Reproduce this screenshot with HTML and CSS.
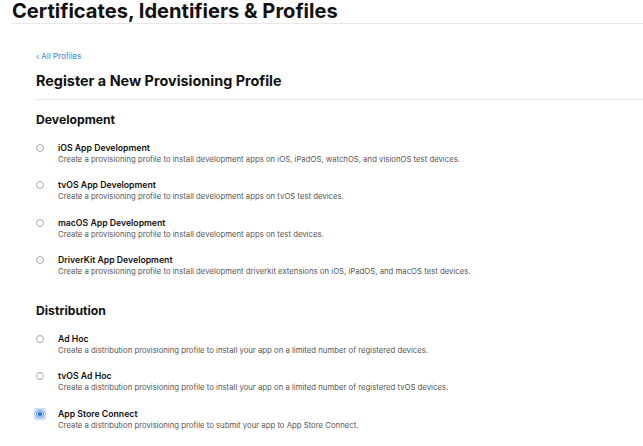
FILE: index.html
```html
<!DOCTYPE html>
<html>
<head>
<meta charset="utf-8">
<link rel="stylesheet" href="styles.css">
</head>
<body>
<header class="page-header">
  <h1 class="page-title">Certificates, Identifiers &amp; Profiles</h1>
</header>
<main class="content">
  <a class="back-link" href="#">&lsaquo; All Profiles</a>
  <h2 class="form-title">Register a New Provisioning Profile</h2>
  <section class="group">
    <h3 class="group-title">Development</h3>
    <label class="option">
      <span class="radio"></span>
      <span class="option-text">
        <span class="option-name">iOS App Development</span>
        <span class="option-desc">Create a provisioning profile to install development apps on iOS, iPadOS, watchOS, and visionOS test devices.</span>
      </span>
    </label>
    <label class="option">
      <span class="radio"></span>
      <span class="option-text">
        <span class="option-name">tvOS App Development</span>
        <span class="option-desc">Create a provisioning profile to install development apps on tvOS test devices.</span>
      </span>
    </label>
    <label class="option">
      <span class="radio"></span>
      <span class="option-text">
        <span class="option-name">macOS App Development</span>
        <span class="option-desc">Create a provisioning profile to install development apps on test devices.</span>
      </span>
    </label>
    <label class="option">
      <span class="radio"></span>
      <span class="option-text">
        <span class="option-name">DriverKit App Development</span>
        <span class="option-desc">Create a provisioning profile to install development driverkit extensions on iOS, iPadOS, and macOS test devices.</span>
      </span>
    </label>
  </section>
  <section class="group">
    <h3 class="group-title">Distribution</h3>
    <label class="option">
      <span class="radio"></span>
      <span class="option-text">
        <span class="option-name">Ad Hoc</span>
        <span class="option-desc">Create a distribution provisioning profile to install your app on a limited number of registered devices.</span>
      </span>
    </label>
    <label class="option">
      <span class="radio"></span>
      <span class="option-text">
        <span class="option-name">tvOS Ad Hoc</span>
        <span class="option-desc">Create a distribution provisioning profile to install your app on a limited number of registered tvOS devices.</span>
      </span>
    </label>
    <label class="option">
      <span class="radio radio-checked"></span>
      <span class="option-text">
        <span class="option-name">App Store Connect</span>
        <span class="option-desc">Create a distribution provisioning profile to submit your app to App Store Connect.</span>
      </span>
    </label>
  </section>
</main>
</body>
</html>
```

FILE: styles.css
```css
html {
  background: #ffffff;
}
html, body {
  margin: 0;
  padding: 0;
  overflow: hidden;
}
body {
  font-family: Inter, "Liberation Sans", Arial, sans-serif;
  color: #1d1d1f;
}
.page-header {
  margin-left: 12px;
  border-bottom: 1px solid #e8e8e8;
  height: 23px;
}
.page-title {
  margin: 0;
  padding-top: 1px;
  font-size: 20.1px;
  line-height: 20px;
  font-weight: 700;
  color: #111;
}
.content {
  padding-left: 36px;
  padding-top: 26px;
}
.back-link {
  display: block;
  font-size: 8px;
  line-height: 12px;
  color: #2f7fd8;
  text-decoration: none;
}
.form-title {
  margin: 10px 0 0;
  font-size: 14.4px;
  line-height: 18px;
  font-weight: 700;
  color: #111;
  padding-bottom: 9px;
  border-bottom: 1px solid #e8e8e8;
}
.group {
  margin-top: 12px;
}
.group + .group {
  margin-top: 26px;
}
.group-title {
  margin: 0;
  font-size: 12.2px;
  line-height: 16px;
  font-weight: 700;
  color: #111;
}
.option {
  display: flex;
  align-items: flex-start;
  margin-top: 14.4px;
}
.group-title + .option {
  margin-top: 13.8px;
}
.radio {
  position: relative;
  flex: none;
  box-sizing: border-box;
  width: 8px;
  height: 8px;
  border-radius: 50%;
  border: 1px solid #a9a9a9;
  background: #fff;
  margin: 2px 14px 0 0;
}
.radio-checked {
  border-color: #3a86f5;
  background: radial-gradient(circle, #1f6ff0 0 1.9px, #ffffff 2.3px);
}
.radio-checked::before {
  content: "";
  position: absolute;
  left: -3px;
  top: -3px;
  width: 12px;
  height: 12px;
  border-radius: 2px;
  background: #c9ddfb;
  z-index: -1;
}
.option-text {
  display: flex;
  flex-direction: column;
}
.option-name {
  font-size: 8.7px;
  line-height: 12px;
  font-weight: 600;
  color: #111;
}
.option-desc {
  font-size: 7.75px;
  line-height: 11px;
  color: #555;
}
```
